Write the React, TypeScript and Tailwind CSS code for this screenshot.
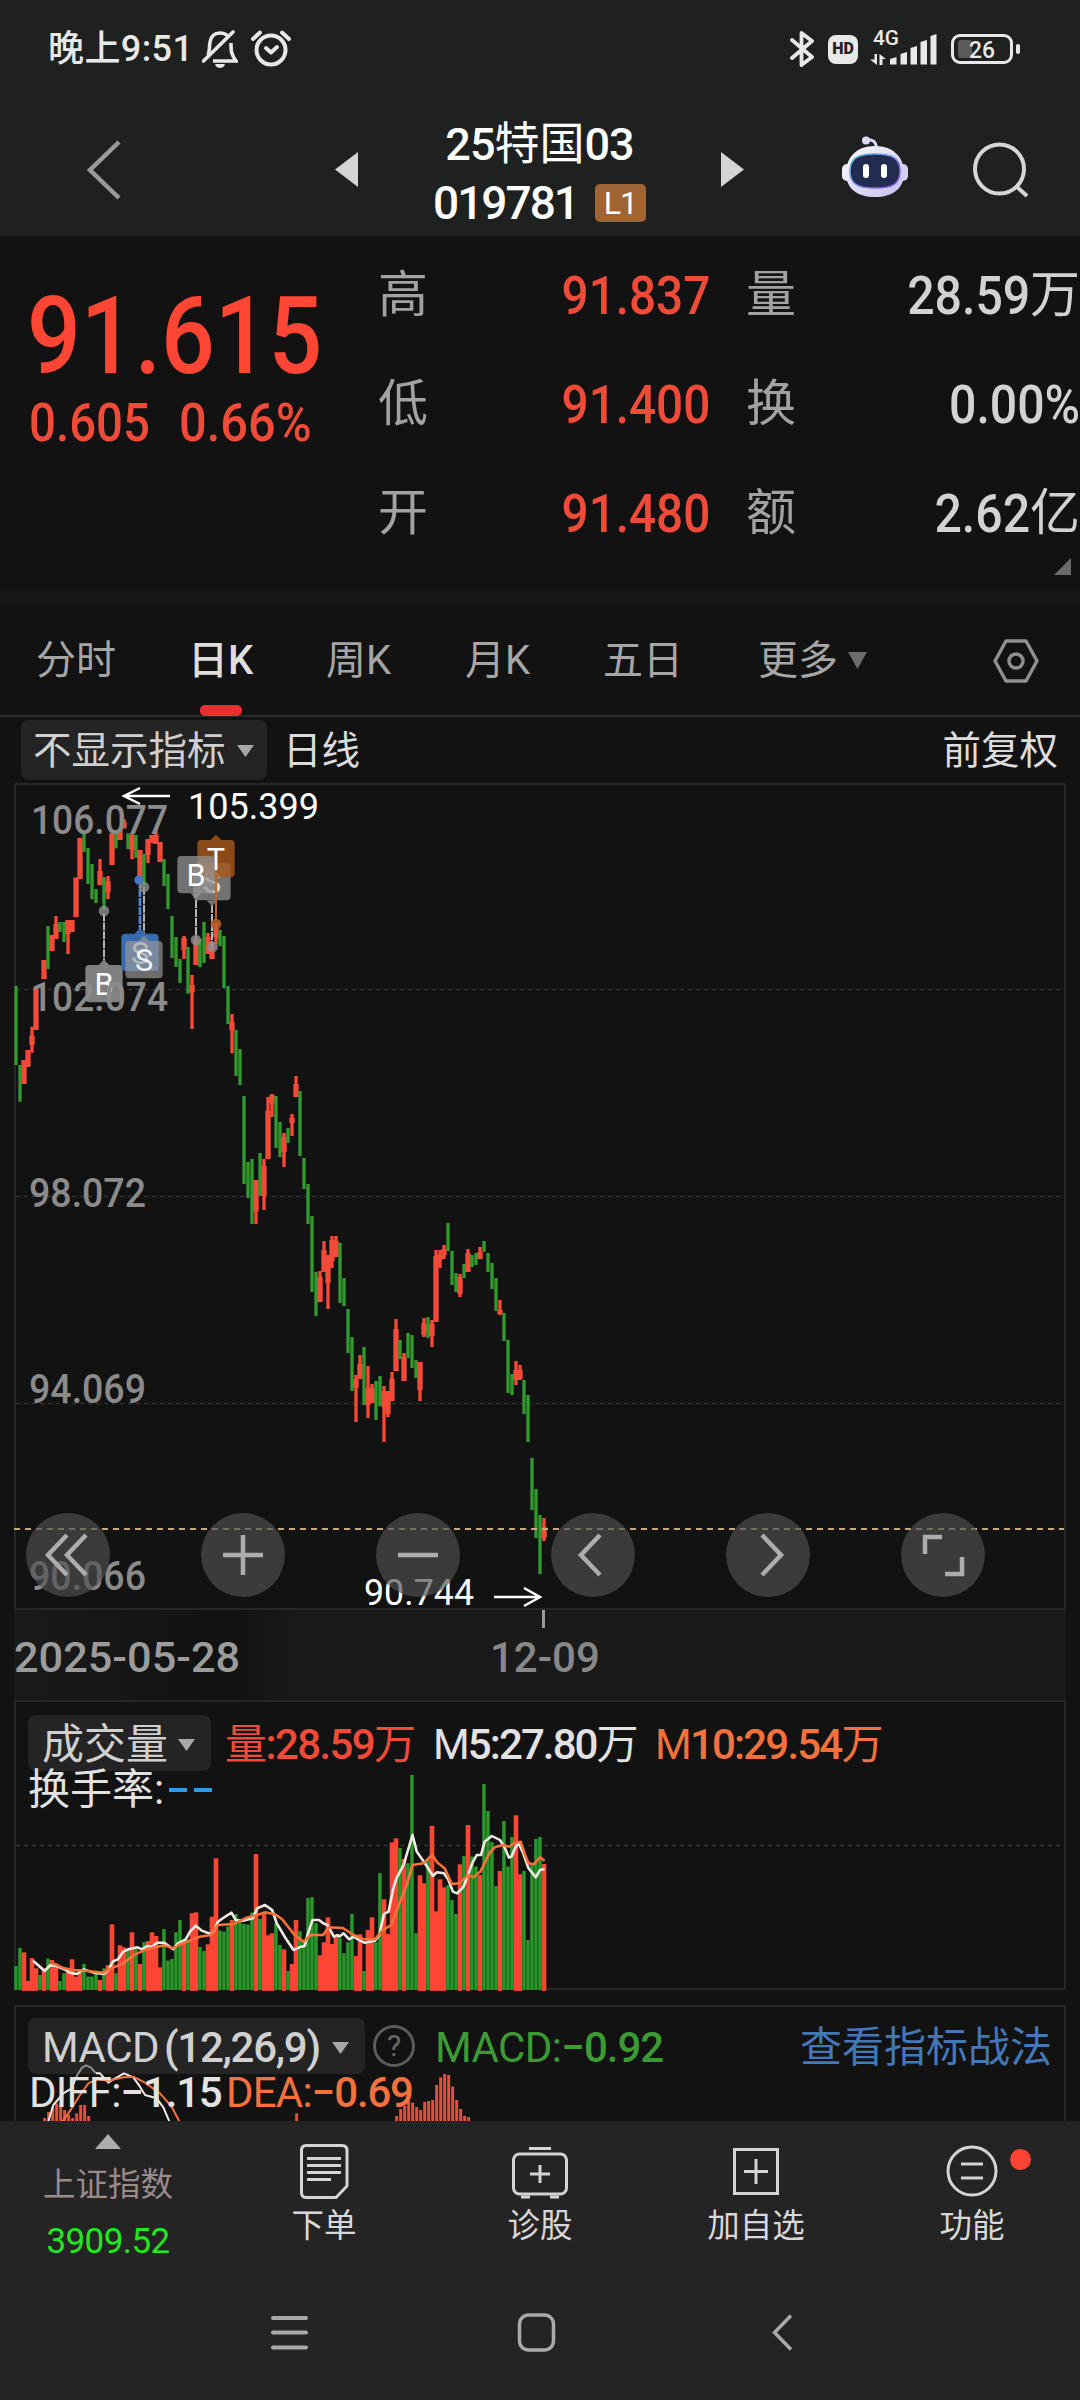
import type { ReactNode } from "react";

// One row per trading day: direction, high, low, optional body top and bottom
type Bar = [string, number, number, number?, number?];

const FIRST_HALF: (Bar | null)[] = [
  ["g", 648, 885], ["g", 885, 995], ["r", 870, 942], ["r", 840, 890], ["r", 770, 848, 797, 825],
  ["r", 653, 780], null, ["r", 570, 627], ["g", 468, 597], ["r", 495, 543],
  ["r", 438, 507, 462, 507], ["g", 456, 486], ["g", 456, 516], ["r", 450, 552, 450, 492], ["r", 450, 486],
  ["r", 323, 441], ["r", 204, 327], ["g", 192, 246], ["g", 234, 342], ["g", 282, 387],
  ["g", 357, 399], ["r", 267, 345, 303, 345], ["g", 321, 420], ["r", 318, 387, 333, 367], ["r", 190, 285],
  ["g", 190, 235], ["r", 180, 210], ["r", 147, 175, 155, 175], ["g", 190, 237], ["r", 190, 267, 195, 240],
  ["g", 195, 264], ["r", 240, 320], ["g", 252, 345], ["r", 207, 279, 207, 255], ["r", 195, 219],
  ["r", 180, 222, 195, 222], ["r", 216, 276], ["g", 267, 348], ["g", 312, 417], ["g", 438, 564],
  ["g", 501, 591], ["g", 567, 639], ["r", 498, 567, 504, 540], ["g", 531, 671], ["r", 615, 777, 645, 667],
  ["r", 507, 585], ["g", 507, 591], ["g", 456, 579], ["r", 489, 552, 501, 552], ["r", 516, 567],
  ["r", 459, 522, 474, 502], ["g", 480, 528], ["g", 498, 654], ["g", 648, 762], ["r", 732, 850, 756, 780],
  ["g", 780, 918], ["g", 837, 945],
];

const SECOND_HALF: Bar[] = [
  ["g", 168, 432], ["g", 366, 474], ["g", 357, 552], ["r", 420, 552, 420, 514], ["g", 339, 468],
  ["r", 357, 510, 378, 468], ["r", 171, 357, 212, 357], ["r", 162, 231, 165, 190], ["g", 168, 324],
  ["g", 246, 351], ["r", 279, 381, 290, 336], ["g", 264, 309], ["r", 222, 288, 234, 249],
  ["r", 108, 171, 132, 171], ["g", 153, 348], ["g", 354, 447], ["g", 432, 552], ["g", 528, 756],
  ["g", 696, 828], ["r", 693, 786, 711, 786], ["r", 603, 696, 630, 696], ["r", 645, 807, 645, 729],
  ["r", 588, 684, 600, 663], ["r", 588, 651, 603, 651], ["g", 609, 789], ["g", 714, 798],
  ["g", 807, 939], ["g", 891, 1053], ["r", 1005, 1146, 1017, 1044], ["r", 945, 1017, 972, 1017],
  ["g", 921, 1095], ["r", 978, 1134, 1044, 1095], ["r", 1032, 1089, 1044, 1089], ["g", 1023, 1140],
  ["g", 1008, 1098], ["r", 1038, 1206, 1053, 1101], ["r", 1053, 1131, 1053, 1122],
  ["r", 996, 1083, 1017, 1083], ["r", 837, 993, 867, 993], ["g", 900, 957], ["r", 939, 1023, 951, 1023],
  ["g", 879, 954], ["g", 885, 984], ["g", 960, 1014], ["r", 966, 1083, 966, 1050],
  ["r", 834, 891, 849, 885], ["g", 831, 894], ["r", 840, 921, 852, 888], ["r", 630, 846, 648, 846],
  ["r", 630, 684, 645, 660], ["r", 615, 657, 627, 645], ["g", 549, 633], ["g", 633, 735],
  ["g", 699, 756], ["r", 702, 771, 711, 762], ["g", 672, 714], ["r", 627, 696, 639, 696],
  ["g", 645, 681], ["g", 639, 675], ["r", 621, 657, 636, 657], ["g", 603, 636], ["g", 639, 696],
  ["g", 669, 747], ["g", 714, 813], ["r", 780, 825, 810, 822], ["g", 819, 903], ["g", 900, 1059],
  ["g", 1002, 1065], ["r", 963, 1035, 990, 1020], ["r", 975, 1020, 990, 1017], ["g", 1020, 1122],
  ["g", 1065, 1206], ["g", 1254, 1410], ["g", 1347, 1494], ["g", 1425, 1602], ["r", 1434, 1503, 1461, 1494],
];

const VOLUME =
  "g828 g774 r787 r873 r804 r835 g855 r835 g806 r810 r820 g873 g850 r840 r808 r860 r845 g822 g860 g860 " +
  "g845 r870 g835 r825 r703 g850 r766 r772 g780 r727 g775 r822 g757 r753 r727 r738 r832 g717 g812 g807 " +
  "g727 g690 r755 g750 r670 r667 g771 g783 r763 r680 r505 g722 g725 g710 r690 g672 g695 g702 g704 g668 " +
  "r492 g687 r665 r736 r730 g700 g765 r778 g843 r822 r690 g724 g755 g624 g622 g700 r796 r757 r682 r762 " +
  "r740 g745 g790 g757 g672 r798 r733 g843 r720 r682 g757 g549 r628 r732 r457 r445 g474 r507 g520 g255 " +
  "g730 r556 r580 g510 r408 r664 r568 r592 g586 g630 g672 r523 g498 r405 g500 g530 r555 g282 g363 g457 " +
  "g588 r543 g393 g530 g441 r376 r553 g543 g750 g520 g447 g441 r522";

const MA5 =
  "92,812 103,822 125,843 140,826 158,828 185,840 195,848 215,852 235,838 262,848 292,852 305,838 315,815 330,808 345,785 362,777 385,772 398,778 412,768 425,770 440,758 460,758 485,778 498,760 520,748 532,725 548,707 565,722 590,732 600,722 610,695 628,682 648,668 660,690 680,692 708,685 720,655 742,645 762,660 775,700 800,745 822,780 838,772 853,768 862,732 875,690 893,690 905,700 917,705 935,740 945,735 950,740 962,730 978,748 990,740 1005,750 1020,758 1050,752 1062,735 1075,672 1088,665 1100,600 1110,565 1130,525 1155,435 1167,485 1190,520 1212,558 1223,547 1243,550 1255,568 1268,605 1280,610 1298,590 1312,550 1323,518 1335,495 1347,495 1357,455 1377,438 1400,450 1412,470 1425,503 1432,500 1442,475 1452,458 1465,490 1480,535 1500,562 1512,540 1525,537";
const MA10 =
  "148,820 180,835 205,840 240,842 290,848 305,838 345,820 375,795 410,778 460,766 485,775 500,765 530,752 560,740 590,735 610,705 655,702 690,683 720,675 742,667 770,673 790,688 825,735 850,755 870,735 905,735 920,712 960,714 990,735 1020,748 1050,748 1070,722 1095,705 1115,650 1140,580 1155,525 1185,520 1210,495 1225,518 1245,535 1265,582 1285,580 1312,555 1325,562 1345,545 1370,490 1385,472 1407,465 1425,470 1440,460 1458,455 1470,495 1480,520 1495,523 1512,502 1525,512";

const MACD_BARS = [
  [134, 384], [146, 366], [158, 352], [170, 340], [182, 345], [194, 360], [206, 375], [218, 384],
  [230, 370], [242, 345], [254, 345], [266, 378], [890, 370], [1190, 378], [1202, 357], [1214, 348],
  [1226, 333], [1238, 338], [1250, 351], [1262, 360], [1274, 336], [1286, 333], [1298, 330],
  [1310, 285], [1322, 262], [1334, 252], [1346, 255], [1358, 290], [1370, 330], [1382, 357],
  [1394, 378], [1406, 381],
];

const STATS = [
  ["高", "91.837", "量", "28.59", "万"],
  ["低", "91.400", "换", "0.00%", ""],
  ["开", "91.480", "额", "2.62", "亿"],
];

const RED = "#ff4634";
const GREEN = "#33992f";

function Down({ className }: { className: string }) {
  return (
    <svg className={className} viewBox="0 0 16 12" preserveAspectRatio="none" fill="currentColor">
      <path d="M0 0H16L8 12Z" />
    </svg>
  );
}

function StatusBar() {
  return (
    <div className="h-[98px] flex items-center justify-between pl-[48px] pr-[59px] text-[#e8e8e8]">
      <div className="flex items-center">
        <span className="w-[146px] text-[36px] leading-[40px] font-medium tracking-[0.400px] whitespace-nowrap">晚上9:51</span>
        <svg className="ml-2 w-9 h-[38px]" viewBox="0 0 36 38" fill="none" stroke="currentColor" strokeWidth="3.600">
          <path d="M1.500 31L31 2" strokeLinecap="round" />
          <path d="M6 25C8 21 7 17 8 12C9 6 13 3 18 3C21 3 24 4 26 6M29 13C29 21 29 24 34 31H11" />
          <path d="M13 34H23C22 37 20 38 18 38C16 38 14 37 13 34Z" fill="currentColor" stroke="none" />
        </svg>
        <svg className="ml-[13px] w-10 h-[38px]" viewBox="0 0 40 38" fill="none" stroke="currentColor" strokeWidth="4">
          <circle cx="20" cy="20" r="14.500" />
          <path d="M2 9L9 2.500M38 9L31 2.500" strokeLinecap="round" />
          <path d="M15 18L20 22.500L26 17" strokeLinecap="round" strokeLinejoin="round" />
        </svg>
      </div>
      <div className="flex items-center">
        <svg className="w-6 h-[38px]" viewBox="0 0 24 38" fill="none" stroke="currentColor" strokeWidth="3.800" strokeLinejoin="round" strokeLinecap="round">
          <path d="M2 10L22 27L11.500 35V3L22 11L2 28" />
        </svg>
        <span className="ml-[14px] w-[30px] h-[29px] rounded-lg bg-[#e8e8e8] text-[#1f2121] text-[16px] font-black flex items-center justify-center">
          HD
        </span>
        <svg className="ml-3 w-[68px] h-[38px] overflow-visible" viewBox="0 0 68 38" fill="currentColor">
          <text x="3" y="15" fontSize="20.500" textLength="26" lengthAdjust="spacingAndGlyphs" fontWeight="500">4G</text>
          <path d="M4.500 24H7V35L0 29.500H4.500ZM9.500 24L16 29H12.500V35H9.500Z" />
          <path d="M20 34.500V29L26.500 27V34.500ZM30.500 34.500V24L37 22V34.500ZM40.500 34.500V18L47 16V34.500ZM50.500 34.500V12L57 10V34.500ZM60.500 34.500V6L66.500 4V34.500Z" />
        </svg>
        <svg className="ml-[13px] w-[70px] h-[30px]" viewBox="0 0 70 30">
          <rect x="1.500" y="1.500" width="59" height="27" rx="7.500" fill="none" stroke="currentColor" strokeWidth="3" />
          <rect x="7" y="6" width="14" height="18" rx="3" fill="#5b5b5b" />
          <rect x="65" y="10" width="4" height="10" rx="2" fill="currentColor" />
          <text x="18" y="24" fontSize="24" textLength="26" lengthAdjust="spacingAndGlyphs" fontWeight="500" fill="currentColor">26</text>
        </svg>
      </div>
    </div>
  );
}

function Robot() {
  return (
    <svg className="w-[66px] h-[62px]" viewBox="0 0 66 62">
      <defs>
        <linearGradient id="shell" x1="0" y1="0" x2="1" y2="1">
          <stop offset="0" stopColor="#fbfbff" />
          <stop offset="1" stopColor="#c3bfee" />
        </linearGradient>
        <linearGradient id="rim" x1="0" y1="0" x2="1" y2="1">
          <stop offset="0" stopColor="#55c8dc" />
          <stop offset="1" stopColor="#8a3fe0" />
        </linearGradient>
      </defs>
      <path d="M24 4C30 3 34 5 34.500 12" fill="none" stroke="#dcd9f6" strokeWidth="3" />
      <circle cx="24" cy="4.500" r="4" fill="#dcd9f6" />
      <rect x="0" y="28" width="10" height="17" rx="5" fill="#eeeefc" />
      <rect x="56" y="28" width="10" height="17" rx="5" fill="#d4d2f2" />
      <path d="M33 10C52 10 62 22 62 37C62 53 50 61 33 61C16 61 4 53 4 37C4 22 14 10 33 10Z" fill="url(#shell)" />
      <path d="M33 18C50 18 58 22 58 35C58 48 50 52 33 52C16 52 8 48 8 35C8 22 16 18 33 18Z" fill="#222b50" stroke="url(#rim)" strokeWidth="1.500" />
      <rect x="21" y="28" width="6" height="14" rx="3" fill="#fff" />
      <rect x="39" y="28" width="6" height="14" rx="3" fill="#fff" />
    </svg>
  );
}

function Header() {
  return (
    <header className="h-[138px] flex items-center">
      <svg className="ml-[86px] w-9 h-[60px] relative top-[3px]" viewBox="0 0 36 60" fill="none" stroke="#999" strokeWidth="4.500">
        <path d="M33 2L4 30L33 58" />
      </svg>
      <svg className="ml-[213px] w-[23px] h-[35px] relative top-[2px]" viewBox="0 0 23 35" fill="#d4d4d4">
        <path d="M23 0V35L0 17.500Z" />
      </svg>
      <div className="w-[363px] pt-[13px] flex flex-col items-center text-white font-medium">
        <div className="h-[59px] flex items-center text-[45px] leading-none font-normal">
          <span className="tracking-[-1px] font-medium">25</span>
          <span>特国</span>
          <span className="tracking-[-1px] font-medium">03</span>
        </div>
        <div className="h-[58px] flex items-center">
          <span className="text-[46px] leading-none tracking-[-2px]">019781</span>
          <span className="ml-[17px] w-[51px] h-[38px] rounded-[5px] bg-[#a06434] text-[32px] font-normal flex items-center justify-center tracking-[-1px]">
            L1
          </span>
        </div>
      </div>
      <svg className="w-[23px] h-[35px] relative top-[2px]" viewBox="0 0 23 35" fill="#d4d4d4">
        <path d="M0 0V35L23 17.500Z" />
      </svg>
      <div className="ml-[98px]">
        <Robot />
      </div>
      <svg className="ml-[64px] w-[58px] h-[58px] relative top-[3px]" viewBox="0 0 58 58" fill="none" stroke="#d6d6d6" strokeWidth="4">
        <circle cx="27.500" cy="28" r="24.500" />
        <path d="M45 46L55 55" />
      </svg>
    </header>
  );
}

function Quote() {
  return (
    <section className="h-[354px] flex text-[#f04a38] relative">
      <div className="w-[378px] pl-[27px] pt-[48px]">
        <div className="text-[107px] leading-[106px] font-medium text-[#ff4634] w-max origin-left scale-x-[0.885]">91.615</div>
        <div className="mt-[7px] pl-[2px] flex text-[53px] leading-[53px] font-medium">
          <span className="w-[150px]"><span className="inline-block origin-left scale-x-[0.895]">0.605</span></span>
          <span className="inline-block origin-left scale-x-[0.92]">0.66%</span>
        </div>
      </div>
      <div className="flex-1 flex flex-col pt-[4px]">
        {STATS.map(([a, v, b, w, unit]) => (
          <div key={a} className="h-[109px] flex items-center text-[50px] leading-none text-[#a2a2a2]">
            <span className="w-[50px]">{a}</span>
            <span className="w-[282px] pt-[3px] text-right text-[53px] font-medium text-[#f04a38]">
              <span className="inline-block origin-right scale-x-[0.9]">{v}</span>
            </span>
            <span className="ml-[36px] w-[50px]">{b}</span>
            <span className="flex-1 text-[#d2d2d2] flex items-center justify-end">
              <span className="inline-block pt-[3px] origin-right scale-x-[0.91] text-[53px] font-medium">{w}</span>
              <span>{unit}</span>
            </span>
          </div>
        ))}
      </div>
      <svg className="absolute right-[9px] bottom-[15px] w-[17px] h-[17px]" viewBox="0 0 17 17" fill="#6a6a6a">
        <path d="M17 0V17H0Z" />
      </svg>
    </section>
  );
}

function Tabs() {
  return (
    <nav className="h-[113px] pt-[2px] border-b-2 border-[#2b2b2b] flex items-center text-[40px] leading-none text-[#a6a6a6]">
      <span className="ml-[36px] w-[152px]">分时</span>
      <span className="w-[138px] relative font-medium text-[#dedede] whitespace-nowrap">
        日K
        <i className="absolute left-[12px] top-[64px] w-[42px] h-[11px] rounded-[5px] bg-[#e93030]" />
      </span>
      <span className="w-[139px]">周K</span>
      <span className="w-[138px]">月K</span>
      <span className="w-[155px]">五日</span>
      <span className="w-[81px]">更多</span>
      <Down className="ml-[9px] w-[19px] h-[17px] text-[#6b6b6b]" />
      <svg className="ml-[126px] w-[46px] h-[44px]" viewBox="0 0 46 44" fill="none" stroke="#8f8f8f" strokeWidth="3.500">
        <path d="M13 2H33L44 22L33 42H13L2 22Z" strokeLinejoin="round" />
        <circle cx="23" cy="22" r="7" />
      </svg>
    </nav>
  );
}

function Candle({ bar, x }: { bar: Bar; x: number }) {
  const [dir, hi, lo, top = hi, bottom = lo] = bar;
  if (dir === "g") return <rect x={x - 5} y={hi} width="10" height={lo - hi} fill={GREEN} />;
  return (
    <g fill="#f54a38">
      <rect x={x - 5} y={hi} width="10" height={lo - hi} />
      <rect x={x - 8} y={top} width="16" height={bottom - top} />
    </g>
  );
}

function Marker({ x, y, label, fill, down }: { x: number; y: number; label: string; fill: string; down?: boolean }) {
  return (
    <g>
      <path d={down ? `M${x - 16} ${y + 112}h32l-16 18z` : `M${x - 16} ${y}h32l-16 -16z`} fill={fill} />
      <rect x={x - 56} y={y} width="112" height="112" rx="12" fill={fill} />
      <text x={x} y={y + 90} fontSize="92" fill="#fff" textAnchor="middle">{label}</text>
    </g>
  );
}

function PriceChart() {
  return (
    <svg className="block w-[1052px] h-[827px]" viewBox="14 783 1052 827">
      <rect x="15" y="784" width="1050" height="825" fill="none" stroke="#262626" strokeWidth="2" />
      <path d="M16 989.500H1064M16 1196.500H1064M16 1403.500H1064" stroke="#303030" strokeWidth="1.300" strokeDasharray="4 4" />
      <g transform="translate(0 770) scale(0.33333)">
        {FIRST_HALF.map((bar, i) => bar && <Candle key={i} bar={bar} x={48 + i * 12} />)}
      </g>
      <g transform="translate(0 1040) scale(0.33333)">
        {SECOND_HALF.map((bar, i) => <Candle key={i} bar={bar} x={732 + i * 12} />)}
      </g>
      <path d="M14 1529H1064" stroke="#c9a97c" strokeWidth="2" strokeDasharray="6 5" />
      <g transform="translate(0 770) scale(0.33333)">
        <g strokeWidth="6" strokeDasharray="24 3">
          <path d="M312 430V572M432 350V500M588 390V510M636 405V530" stroke="#b5b5b5" />
          <path d="M420 330V480" stroke="#4c8ad8" strokeWidth="8" />
        </g>
        <g fill="#8d8d8d" fillOpacity="0.8">
          <circle cx="312" cy="423" r="16" />
          <circle cx="432" cy="351" r="16" />
          <circle cx="588" cy="510" r="16" />
          <circle cx="638" cy="531" r="16" />
        </g>
        <circle cx="417" cy="330" r="14" fill="#4478c0" />
        <Marker x={312} y={585} label="B" fill="#808080" />
        <Marker x={420} y={491} label="S" fill="#386bb0" />
        <g opacity="0.9"><Marker x={432} y={513} label="S" fill="#999999c0" /></g>
        <g opacity="0.85"><Marker x={636} y={279} label="S" fill="#858585" down /></g>
        <Marker x={648} y={210} label="T" fill="#a5571cd0" />
        <Marker x={588} y={258} label="B" fill="#959595b8" down />
        <path d="M648 300V450" stroke="#b8682c" strokeWidth="6" />
        <circle cx="648" cy="462" r="16" fill="#b8622a" fillOpacity="0.85" />
      </g>
      <g fontSize="41" fontWeight="500" fill="#8b8b8b">
        <text x="31" y="833.500" textLength="137" lengthAdjust="spacingAndGlyphs">106.077</text>
        <text x="31" y="1010.500" textLength="137" lengthAdjust="spacingAndGlyphs">102.074</text>
        <text x="29" y="1207" textLength="117" lengthAdjust="spacingAndGlyphs">98.072</text>
        <text x="29" y="1403" textLength="117" lengthAdjust="spacingAndGlyphs">94.069</text>
        <text x="29" y="1590" textLength="117" lengthAdjust="spacingAndGlyphs">90.066</text>
      </g>
      <g fontSize="37" fill="#fff">
        <text x="188" y="819" textLength="131" lengthAdjust="spacingAndGlyphs">105.399</text>
        <text x="364" y="1605" textLength="110" lengthAdjust="spacingAndGlyphs">90.744</text>
      </g>
      <path d="M170 796H125M140 788L124 796L140 804M494 1597H539M524 1588L540 1597L524 1606" fill="none" stroke="#fff" strokeWidth="2.500" />
    </svg>
  );
}

function RoundButton({ children }: { children: ReactNode }) {
  return (
    <button className="w-[84px] h-[84px] rounded-full bg-[#515151]/67 flex items-center justify-center">
      <svg className="w-12 h-12" viewBox="0 0 48 48" fill="none" stroke="#adadad" strokeWidth="4.500">
        {children}
      </svg>
    </button>
  );
}

function VolumeChart() {
  return (
    <svg className="absolute left-0 top-0 w-[1052px] h-[290px]" viewBox="14 1702 1052 290">
      <path d="M15 1702V1989H1065V1702" fill="none" stroke="#262626" strokeWidth="2" />
      <path d="M16 1845.500H1064" stroke="#333" strokeWidth="1.300" strokeDasharray="4 4" />
      <g transform="translate(0 1690)">
        {VOLUME.split(" ").map((v, i) => {
          const y = Number(v.slice(1)) / 3;
          const x = 14 + i * 4;
          return v[0] === "r" ? (
            <rect key={i} x={x - 0.3} y={y} width="4.600" height={300.8 - y} fill={RED} />
          ) : (
            <g key={i}>
              <rect x={x} y={y} width="4" height={300 - y} fill="#0e5c10" />
              <rect x={x + 0.4} y={y} width="3" height={300 - y} fill="#2f942d" />
            </g>
          );
        })}
        <g transform="scale(0.35714 0.33333)" fill="none" strokeLinejoin="round" strokeWidth="7.500">
          <polyline points={MA5} stroke="#efeae4" />
          <polyline points={MA10} stroke="#f8703a" />
        </g>
      </g>
    </svg>
  );
}

function Picker({ className, children }: { className: string; children: ReactNode }) {
  return (
    <button className={`rounded-lg bg-[#242424] text-[#d0d0d0] flex items-center leading-none whitespace-nowrap ${className}`}>
      {children}
      <Down className="ml-auto w-[17px] h-[12px] text-[#a8a8a8]" />
    </button>
  );
}

function Volume() {
  return (
    <section className="ml-[14px] w-[1052px] h-[303px] relative">
      <VolumeChart />
      <div className="relative flex pt-[13px] pl-[14px] text-[42px] leading-[60px] h-[69px] font-medium whitespace-nowrap">
        <Picker className="w-[183px] h-[56px] pt-[3px] pl-[14px] pr-[16px] font-normal">成交量</Picker>
        <span className="ml-[14px] w-[208px] tracking-[-1.600px] text-[#f04a38]"><span className="font-normal">量</span>:28.59<span className="font-normal">万</span></span>
        <span className="w-[222px] tracking-[-1.900px] text-[#e2e2e2]"><span className="font-normal">M</span>5:27.80<span className="font-normal">万</span></span>
        <span className="tracking-[-1.800px] text-[#f4713e]"><span className="font-normal">M</span>10:29.54<span className="font-normal">万</span></span>
      </div>
      <div className="relative -mt-[3px] pl-[14px] h-[44px] flex items-center text-[42px] leading-none text-[#e2e2e2]">
        换手率:
        <i className="ml-[5px] w-[18px] h-1 bg-[#2b9ce6]" />
        <i className="ml-[7px] w-[18px] h-1 bg-[#2b9ce6]" />
      </div>
    </section>
  );
}

function Macd() {
  return (
    <section className="ml-[14px] w-[1052px] h-[116px] border-2 border-b-0 border-[#262626] relative">
      <div className="h-[67px] flex pt-[11px] pl-[12px] pr-[12px] text-[42px] leading-[60px] whitespace-nowrap">
        <Picker className="w-[337px] h-[56px] pt-[3px] pl-[14px] pr-[16px]">
          <span className="tracking-[-0.500px]">MACD</span>
          <span className="ml-[5px] font-medium tracking-[-1.300px]">(12,26,9)</span>
        </Picker>
        <span className="ml-2 mt-[7px] w-[42px] h-[42px] rounded-full border-[3px] border-[#5c5c5c] text-[#6a6a6a] text-[30px] leading-none flex items-center justify-center">?</span>
        <span className="ml-[20px] tracking-[-0.600px] text-[#3b9a34]">MACD:<span className="font-medium tracking-[-1px]">−0.92</span></span>
        <span className="ml-auto text-[#4377b8]">查看指标战法</span>
      </div>
      <svg className="absolute -left-[2px] -top-[2px] w-[520px] h-[116px]" viewBox="14 2005 520 116">
        <g transform="translate(0 1990) scale(0.33333)">
          {MACD_BARS.map(([x, y]) => (
            <rect key={x} x={x - 4.5} y={y} width="9" height={394 - y} fill="#e0503f" />
          ))}
          <g fill="none" strokeWidth="6" strokeLinejoin="round">
            <path d="M228 262L235 250L246 233L258 226L272 232L288 250" stroke="#8d8d8d" />
            <path d="M145 394L160 345L190 310L215 295L228 262M288 250H300L325 278L340 268L372 250L400 262L420 290L435 315L470 325L490 352L508 394" stroke="#efeae4" />
            <path d="M188 394L215 355L240 315L265 280L290 268L325 272L370 262L400 260L435 278L480 310L515 350L538 394" stroke="#f8703a" />
          </g>
        </g>
      </svg>
      <div className="relative flex pl-[13px] h-[38px] items-center text-[42px] leading-none whitespace-nowrap">
        <span className="w-[197px] text-[#e2e2e2] tracking-[-0.800px]">DIFF:<span className="font-medium tracking-[-1.200px]">−1.15</span></span>
        <span className="text-[#f4713e] tracking-[-0.800px]">DEA:<span className="font-medium tracking-[-1.200px]">−0.69</span></span>
      </div>
    </section>
  );
}

function NavItem({ label, children }: { label: string; children: ReactNode }) {
  return (
    <div className="w-[216px] flex flex-col items-center pt-[20px]">
      <svg className="w-[60px] h-[60px]" viewBox="0 0 60 60" fill="none" stroke="#d4d4d4" strokeWidth="3">
        {children}
      </svg>
      <span className="mt-[8px] text-[32.500px] leading-[34px] text-[#d8d8d8]">{label}</span>
    </div>
  );
}

function BottomBar() {
  return (
    <footer className="h-[279px] bg-[#242424]">
      <div className="h-[144px] flex">
        <div className="w-[216px] flex flex-col items-center pt-[13px]">
          <svg className="w-[26px] h-[15px]" viewBox="0 0 26 15" fill="#adadad">
            <path d="M13 0L26 15H0Z" />
          </svg>
          <span className="mt-[19px] text-[32.500px] leading-[34px] text-[#9b8b88]">上证指数</span>
          <span className="mt-[20px] text-[35px] leading-[40px] text-[#22e622] tracking-[-0.600px]">3909.52</span>
        </div>
        <NavItem label="下单">
          <path d="M12 4.500H48Q53 4.500 53 9.500V45L42 56.500H12Q7.500 56.500 7.500 51.500V9.500Q7.500 4.500 12 4.500Z" />
          <path d="M13 17.500H47M13 24.500H47M13 31.500H47M13 38.500H37" />
        </NavItem>
        <NavItem label="诊股">
          <rect x="3.500" y="13" width="53" height="40" rx="6" />
          <path d="M19 7.500H41M11 56H20M40 56H49M20 33H40M30 24V42" />
        </NavItem>
        <NavItem label="加自选">
          <rect x="8.500" y="8.500" width="43" height="44" />
          <path d="M18 30.500H42M30 18V43" />
        </NavItem>
        <div className="relative">
          <NavItem label="功能">
            <circle cx="30" cy="30" r="24" />
            <path d="M19 23H41M19 37H41" />
          </NavItem>
          <i className="absolute left-[146px] top-[28px] w-[21px] h-[21px] rounded-full bg-[#ff4433]" />
        </div>
      </div>
      <div className="pt-[43px] flex">
        <svg className="ml-[269px] w-[42px] h-[48px]" viewBox="0 0 42 48" stroke="#a9a9a9" strokeWidth="4" strokeLinecap="round">
          <path d="M4 10H37M4 24.500H37M4 39.500H37" />
        </svg>
        <svg className="ml-[205px] w-[42px] h-[48px]" viewBox="0 0 42 48" fill="none" stroke="#a9a9a9" strokeWidth="3.500">
          <rect x="3.500" y="7" width="34" height="35" rx="9" />
        </svg>
        <svg className="ml-[210px] w-[28px] h-[48px]" viewBox="0 0 28 48" fill="none" stroke="#a9a9a9" strokeWidth="3.500">
          <path d="M23 7.500L6.500 24.500L23 41.500" />
        </svg>
      </div>
    </footer>
  );
}

export default function App() {
  return (
    <main className="w-[1080px] h-[2400px] overflow-hidden bg-[#121212] font-[Roboto,'Noto_Sans_CJK_SC',sans-serif]">
      <div className="h-[236px] bg-[#1f2121]">
        <StatusBar />
        <Header />
      </div>
      <Quote />
      <div className="h-[14px] bg-[#171717]" />
      <Tabs />

      {/* Indicator row */}
      <div className="h-[66px] pt-[3px] pl-[21px] pr-[22px] flex items-start text-[38.500px] leading-none text-[#dcdcdc]">
        <button className="w-[246px] h-[60px] rounded-lg bg-[#242424] text-[#d0d0d0] pt-[2px] pl-[12px] pr-[13px] flex items-center whitespace-nowrap">
          不显示指标
          <Down className="ml-auto w-[17px] h-[12px] text-[#a8a8a8]" />
        </button>
        <span className="ml-[16px] h-[62px] flex items-center">日线</span>
        <span className="ml-auto h-[62px] flex items-center">前复权</span>
      </div>

      {/* Price chart with its floating controls */}
      <section className="ml-[14px] relative">
        <PriceChart />
        <div className="absolute left-[12px] top-[730px] flex gap-[91px]">
          <RoundButton><path d="M23 4L4 24L23 44M42 4L23 24L42 44" /></RoundButton>
          <RoundButton><path d="M4 24H44M24 4V44" /></RoundButton>
          <RoundButton><path d="M4 24H44" /></RoundButton>
          <RoundButton><path d="M31 4L12 24L31 44" /></RoundButton>
          <RoundButton><path d="M18 4L37 24L18 44" /></RoundButton>
          <RoundButton><path d="M6 23V6H23M26 43H43V26" /></RoundButton>
        </div>
      </section>

      {/* Date axis */}
      <div className="ml-[14px] w-[1052px] h-[92px] bg-[linear-gradient(90deg,#1a1a1a_0,#121212_190px,#121212_225px,#1a1a1a_290px)] border-b-2 border-[#262626] flex items-center relative text-[42px] leading-none font-medium text-[#9c9c9c]">
        <i className="absolute left-[528px] top-0 w-[3px] h-[18px] bg-[#999]" />
        <span className="w-[476px] pt-[5px] whitespace-nowrap">
          <span className="inline-block origin-left scale-x-[1.03]">2025-05-28</span>
        </span>
        <span className="pt-[5px] text-[#888]">12-09</span>
      </div>

      <Volume />
      <Macd />
      <BottomBar />
    </main>
  );
}
